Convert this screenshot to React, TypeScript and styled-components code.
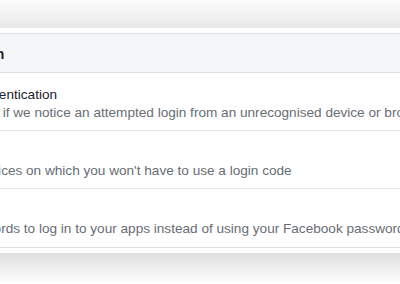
import styled, { createGlobalStyle } from "styled-components"

const GlobalStyle = createGlobalStyle`
  html, body {
    margin: 0;
    padding: 0;
    background: #ffffff;
    overflow: hidden;
  }
  body {
    font-family: "Liberation Sans", Arial, sans-serif;
  }
`

const rows = [
  {
    title: "Use two-factor authentication",
    text: "We'll ask for a code if we notice an attempted login from an unrecognised device or browser.",
  },
  {
    title: "Authorised logins",
    text: "Review a list of devices on which you won't have to use a login code",
  },
  {
    title: "App passwords",
    text: "Use special passwords to log in to your apps instead of using your Facebook password or login codes.",
  },
]

export default function App() {
  return (
    <Page>
      <GlobalStyle />
      <TopShade />
      <Panel>
        <Header>Security and login</Header>
        {rows.map((row) => (
          <Row key={row.title}>
            <Title>{row.title}</Title>
            <Text>{row.text}</Text>
          </Row>
        ))}
      </Panel>
      <BottomShade />
    </Page>
  )
}

const Page = styled.div`
  width: 400px;
  height: 284px;
  overflow: hidden;
  background: #ffffff;
`

const TopShade = styled.div`
  height: 28px;
  background: linear-gradient(#fcfcfc, #e8e8e8);
  margin-bottom: 5px;
`

const Panel = styled.div`
  width: 700px;
  margin-left: -131px;
  border-top: 1px solid #dddfe2;
  border-bottom: 1px solid #dddfe2;
  background: #ffffff;
`

const Header = styled.div`
  height: 39px;
  box-sizing: border-box;
  padding: 11px 12px 0 14px;
  background: #f5f6f7;
  border-bottom: 1px solid #dddfe2;
  font-size: 14px;
  line-height: 18px;
  font-weight: bold;
  color: #1d2129;
`

const Row = styled.div`
  height: 58px;
  box-sizing: border-box;
  padding: 13px 12px 0 12px;
  border-bottom: 1px solid #e5e6e9;
  &:last-child {
    border-bottom: none;
  }
`

const Title = styled.div`
  font-size: 13.6px;
  line-height: 18px;
  color: #1d2129;
  white-space: nowrap;
`

const Text = styled.div`
  font-size: 13.6px;
  line-height: 18px;
  color: #686d74;
  white-space: nowrap;
`

const BottomShade = styled.div`
  height: 28px;
  margin-top: 5px;
  background: linear-gradient(#dedede, #fbfbfb);
`
